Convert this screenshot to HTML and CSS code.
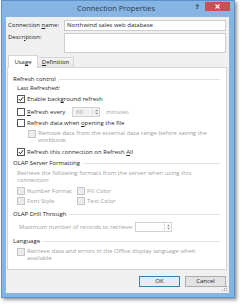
FILE: index.html
```html
<!DOCTYPE html>
<html lang="en">
<head>
    <meta charset="UTF-8">
    <title>Connection Properties</title>
    <link rel="stylesheet" href="styles.css">
</head>
<body>
    <div class="window">
        <div class="titlebar">
            <div></div>
            <div class="title">Connection Properties</div>
            <div class="controls">
                <span class="help">?</span>
                <span class="close">
                    <svg width="5" height="5" viewBox="0 0 5 5"><path d="M0.5 0.5 L4.5 4.5 M4.5 0.5 L0.5 4.5" stroke="#fff" stroke-width="1.1"/></svg>
                </span>
            </div>
        </div>

        <div class="dialog">
            <div class="field-row">
                <label>Connection <u>n</u>ame:</label>
                <div class="input">Northwind sales web database</div>
            </div>
            <div class="field-row desc">
                <label>Descr<u>i</u>ption:</label>
                <div class="input textarea"></div>
            </div>

            <!-- Tabs -->
            <div class="tabs">
                <div class="tab active">Usa<u>g</u>e</div>
                <div class="tab"><u>D</u>efinition</div>
            </div>

            <div class="panel">
                <div class="group-title">Refresh control</div>
                <div class="row plain h8">Last Refreshed:</div>
                <div class="row mt2">
                    <span class="check on"><svg width="6" height="6" viewBox="0 0 6 6"><path d="M0.8 3 L2.4 4.7 L5.2 1.1" fill="none" stroke="#222" stroke-width="1"/></svg></span>
                    <span>Enable back<u>g</u>round refresh</span>
                </div>
                <div class="row mt3">
                    <span class="check"></span>
                    <span class="every"><u>R</u>efresh every</span>
                    <span class="spin disabled">
                        <span class="spin-value">60</span>
                        <span class="spin-arrows"><svg width="5" height="8" viewBox="0 0 5 8"><path d="M1 3.2 L2.5 1.6 L4 3.2Z M1 4.8 L2.5 6.4 L4 4.8Z" fill="#8a8a8a"/></svg></span>
                    </span>
                    <span class="minutes muted">minutes</span>
                </div>
                <div class="row mt1">
                    <span class="check"></span>
                    <span>Refresh data when <u>o</u>pening the file</span>
                </div>
                <div class="row two-line sub mt2 muted">
                    <span class="check off"></span>
                    <span>Remove data from the external data range before saving the<br>workbook</span>
                </div>
                <div class="row mt3">
                    <span class="check on"><svg width="6" height="6" viewBox="0 0 6 6"><path d="M0.8 3 L2.4 4.7 L5.2 1.1" fill="none" stroke="#222" stroke-width="1"/></svg></span>
                    <span>Refresh this connection on Refresh <u>A</u>ll</span>
                </div>

                <div class="group-title mt1">OLAP Server Formatting</div>
                <div class="row two-line plain mt2 muted">Retrieve the following formats from the server when using this<br>connection:</div>
                <div class="row mt2 muted">
                    <span class="cell"><span class="check off"></span>Number Format</span>
                    <span class="cell"><span class="check off"></span>Fill Color</span>
                </div>
                <div class="row muted">
                    <span class="cell"><span class="check off"></span>Font Style</span>
                    <span class="cell"><span class="check off"></span>Text Color</span>
                </div>

                <div class="group-title mt3">OLAP Drill Through</div>
                <div class="row max mt3 muted">
                    <span class="max-label">Maximum number of records to retrieve:</span>
                    <span class="spin wide">
                        <span class="spin-value"></span>
                        <span class="spin-arrows"><svg width="5" height="8" viewBox="0 0 5 8"><path d="M1 3.2 L2.5 1.6 L4 3.2Z M1 4.8 L2.5 6.4 L4 4.8Z" fill="#8a8a8a"/></svg></span>
                    </span>
                </div>

                <div class="group-title mt4">Language</div>
                <div class="row two-line mt2 muted">
                    <span class="check off"></span>
                    <span>Retrieve data and errors in the Office display language when<br>available</span>
                </div>
            </div>

            <div class="buttons">
                <button class="btn default">OK</button>
                <button class="btn">Cancel</button>
            </div>

            <svg class="grip" width="6" height="6" viewBox="0 0 6 6"><path d="M4 0h1v1h-1z M2 2h1v1h-1z M4 2h1v1h-1z M0 4h1v1h-1z M2 4h1v1h-1z M4 4h1v1h-1z" fill="#9a9a9a"/></svg>
        </div>
    </div>
</body>
</html>
```

FILE: styles.css
```css
* {
    margin: 0;
    padding: 0;
    box-sizing: border-box;
}

body {
    width: 242px;
    height: 305px;
    background: #fff;
    font-family: 'Open Sans', 'Noto Sans', sans-serif;
    font-size: 6px;
    color: #2a2a2a;
    overflow: hidden;
}

.window {
    margin-left: 1px;
    width: 234px;
    height: 298px;
    background: #86b5e4;
    border: 1px solid #5b92cc;
    box-shadow: 2px 2px 3px rgba(0,0,0,0.4);
    padding: 0 5px 4px 4px;
}

.titlebar {
    display: grid;
    grid-template-columns: 1fr auto 1fr;
    height: 16px;
    margin: 0 -5px 0 -4px;
    padding-right: 4px;
}

.title {
    font-size: 7.5px;
    line-height: 15px;
    color: #2b3a4a;
}

.controls {
    display: flex;
    justify-content: flex-end;
    align-items: flex-start;
}

.help {
    font-family: 'DejaVu Sans', sans-serif;
    font-weight: bold;
    font-size: 6px;
    line-height: 11px;
    color: #333;
    margin-right: 6px;
}

.close {
    width: 25px;
    height: 9px;
    margin-top: 1px;
    background: #c75050;
    display: flex;
    align-items: center;
    justify-content: center;
}

.close svg {
    display: block;
}

.dialog {
    position: relative;
    height: 276px;
    background: #f0f0f0;
    padding: 3px 2px 6px 1px;
}

.field-row {
    display: grid;
    grid-template-columns: 56px 1fr;
    padding: 0 1px;
}

.field-row label {
    line-height: 11px;
    color: #222;
}

.input {
    height: 11px;
    background: #fff;
    border: 1px solid #cdcdcd;
    padding-left: 2px;
    line-height: 9px;
    color: #222;
}

.desc {
    margin-top: 2px;
}

.desc label {
    line-height: 8px;
}

.textarea {
    height: 20px;
}

/* Tabs */
.tabs {
    display: flex;
    align-items: flex-end;
    height: 13px;
    margin-top: 2px;
    margin-bottom: -1px;
    padding-left: 1px;
    position: relative;
    z-index: 1;
}

.tab {
    width: 36px;
    height: 10px;
    margin-bottom: 1px;
    border: 1px solid #d5d5d5;
    border-bottom: none;
    border-left: none;
    background: linear-gradient(#f3f3f3, #e6e6e6);
    text-align: center;
    line-height: 9px;
    color: #222;
}

.tab.active {
    width: 30px;
    height: 13px;
    margin-bottom: 0;
    border-left: 1px solid #d5d5d5;
    background: #fff;
    line-height: 12px;
}

.panel {
    height: 203px;
    background: #fff;
    border: 1px solid #d5d5d5;
    padding-top: 6px;
}

.group-title {
    display: flex;
    align-items: center;
    height: 10px;
    padding: 0 6px 0 5px;
    color: #222;
}

.group-title::after {
    content: "";
    flex: 1;
    height: 1px;
    margin-left: 3px;
    background: #e2e2e2;
}

.row {
    display: flex;
    align-items: center;
    height: 10px;
    padding-left: 9px;
    white-space: nowrap;
}

.row.h8 {
    height: 8px;
}

.row.two-line {
    height: 14px;
    line-height: 7px;
    align-items: flex-start;
}

.row.sub {
    padding-left: 20px;
}

.muted {
    color: #a0a0a0;
}

.mt1 { margin-top: 1px; }
.mt2 { margin-top: 2px; }
.mt3 { margin-top: 3px; }
.mt4 { margin-top: 4px; }

.check {
    width: 8px;
    height: 8px;
    flex-shrink: 0;
    margin-right: 2px;
    border: 1px solid #555;
    background: #fff;
    display: flex;
    align-items: center;
    justify-content: center;
}

.check.off {
    border-color: #c6c6c6;
    background: #ececec;
}

.check svg {
    display: block;
}

.every {
    width: 45px;
}

.spin {
    display: flex;
    width: 28px;
    height: 10px;
    border: 1px solid #d2d2d2;
    background: #fff;
}

.spin.disabled {
    background: #f2f2f2;
}

.spin.wide {
    width: 37px;
}

.spin-value {
    flex: 1;
    padding-left: 3px;
    line-height: 8px;
    color: #9a9a9a;
}

.spin-arrows {
    width: 7px;
    display: flex;
    align-items: center;
    justify-content: center;
    border-left: 1px solid #e0e0e0;
}

.minutes {
    margin-left: 6px;
}

.cell {
    display: flex;
    align-items: center;
    width: 60px;
}

.max {
    padding-left: 11px;
}

.max-label {
    width: 116px;
}

.buttons {
    display: flex;
    justify-content: flex-end;
    gap: 5px;
    margin-top: 6px;
    padding-right: 1px;
}

.btn {
    width: 41px;
    height: 11px;
    font-family: inherit;
    font-size: 6px;
    line-height: 9px;
    color: #222;
    background: #e3e3e3;
    border: 1px solid #adadad;
}

.btn.default {
    border-color: #3c7fb1;
    background: #e5ecf3;
}

.grip {
    position: absolute;
    right: 1px;
    bottom: 1px;
}
```
